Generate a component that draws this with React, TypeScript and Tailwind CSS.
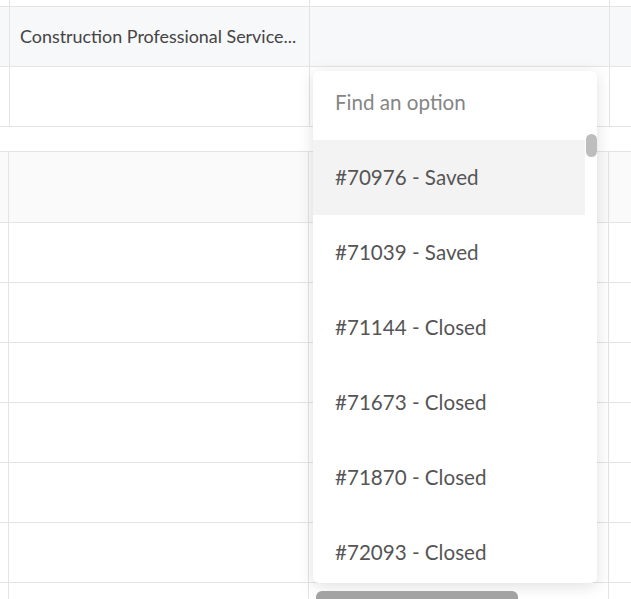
import React from "react";

const line = "border-[#e4e4e4]";

const options = [
  "#70976 - Saved",
  "#71039 - Saved",
  "#71144 - Closed",
  "#71673 - Closed",
  "#71870 - Closed",
  "#72093 - Closed",
];

function TopRow({
  height,
  bg = "bg-white",
  children,
}: {
  height: string;
  bg?: string;
  children?: React.ReactNode;
}) {
  return (
    <div className={`flex border-b ${line} ${bg} ${height}`}>
      <div className={`w-[10px] shrink-0 border-r ${line}`} />
      <div className={`flex w-[300px] shrink-0 items-center overflow-hidden border-r ${line} pl-[10px]`}>
        {children}
      </div>
      <div className={`w-[300px] shrink-0 border-r ${line}`} />
      <div className="flex-1" />
    </div>
  );
}

function BottomRow({ height, bg = "bg-white" }: { height: string; bg?: string }) {
  return (
    <div className={`flex border-b ${line} ${bg} ${height}`}>
      <div className={`w-[9px] shrink-0 border-r ${line}`} />
      <div className={`w-[300px] shrink-0 border-r ${line}`} />
      <div className={`w-[300px] shrink-0 border-r ${line}`} />
      <div className="flex-1" />
    </div>
  );
}

export default function App() {
  return (
    <div
      className="relative h-[599px] w-[631px] overflow-hidden bg-white"
      style={{ fontFamily: "Lato, 'Liberation Sans', sans-serif" }}
    >
      <div>
        <TopRow height="h-[7px]" />
        <TopRow height="h-[60px]" bg="bg-[#f7f8fa]">
          <span className="whitespace-nowrap text-[17.9px] text-[#444]">
            Construction Professional Service...
          </span>
        </TopRow>
        <TopRow height="h-[60px]" />
      </div>

      <div className="h-[24px]" />

      <div className={`border-t ${line}`}>
        <BottomRow height="h-[71px]" bg="bg-[#fafafa]" />
        {Array.from({ length: 7 }).map((_, i) => (
          <BottomRow key={i} height="h-[60px]" />
        ))}
      </div>

      <div className="absolute left-[313px] top-[71px] h-[512px] w-[284px] overflow-hidden rounded-md bg-white shadow-[0_3px_16px_rgba(0,0,0,0.13)]">
        <div className="h-[69px] pl-[22px] pt-[19px] text-[20.6px] leading-6 text-[#858585]">
          Find an option
        </div>
        <div className="w-[272px]">
          {options.map((option, i) => (
            <div
              key={option}
              className={`flex h-[75px] items-center pb-[1px] pl-[22px] text-[20.6px] text-[#555] ${
                i === 0 ? "bg-[#f3f3f3]" : ""
              }`}
            >
              {option}
            </div>
          ))}
        </div>
        <div className="absolute left-[273px] top-[63px] h-[23px] w-[11px] rounded-full bg-[#bdbdbd]" />
      </div>

      <div className="absolute left-[316px] top-[591px] h-[12px] w-[202px] rounded-t-md bg-[#a3a3a3]" />
    </div>
  );
}
